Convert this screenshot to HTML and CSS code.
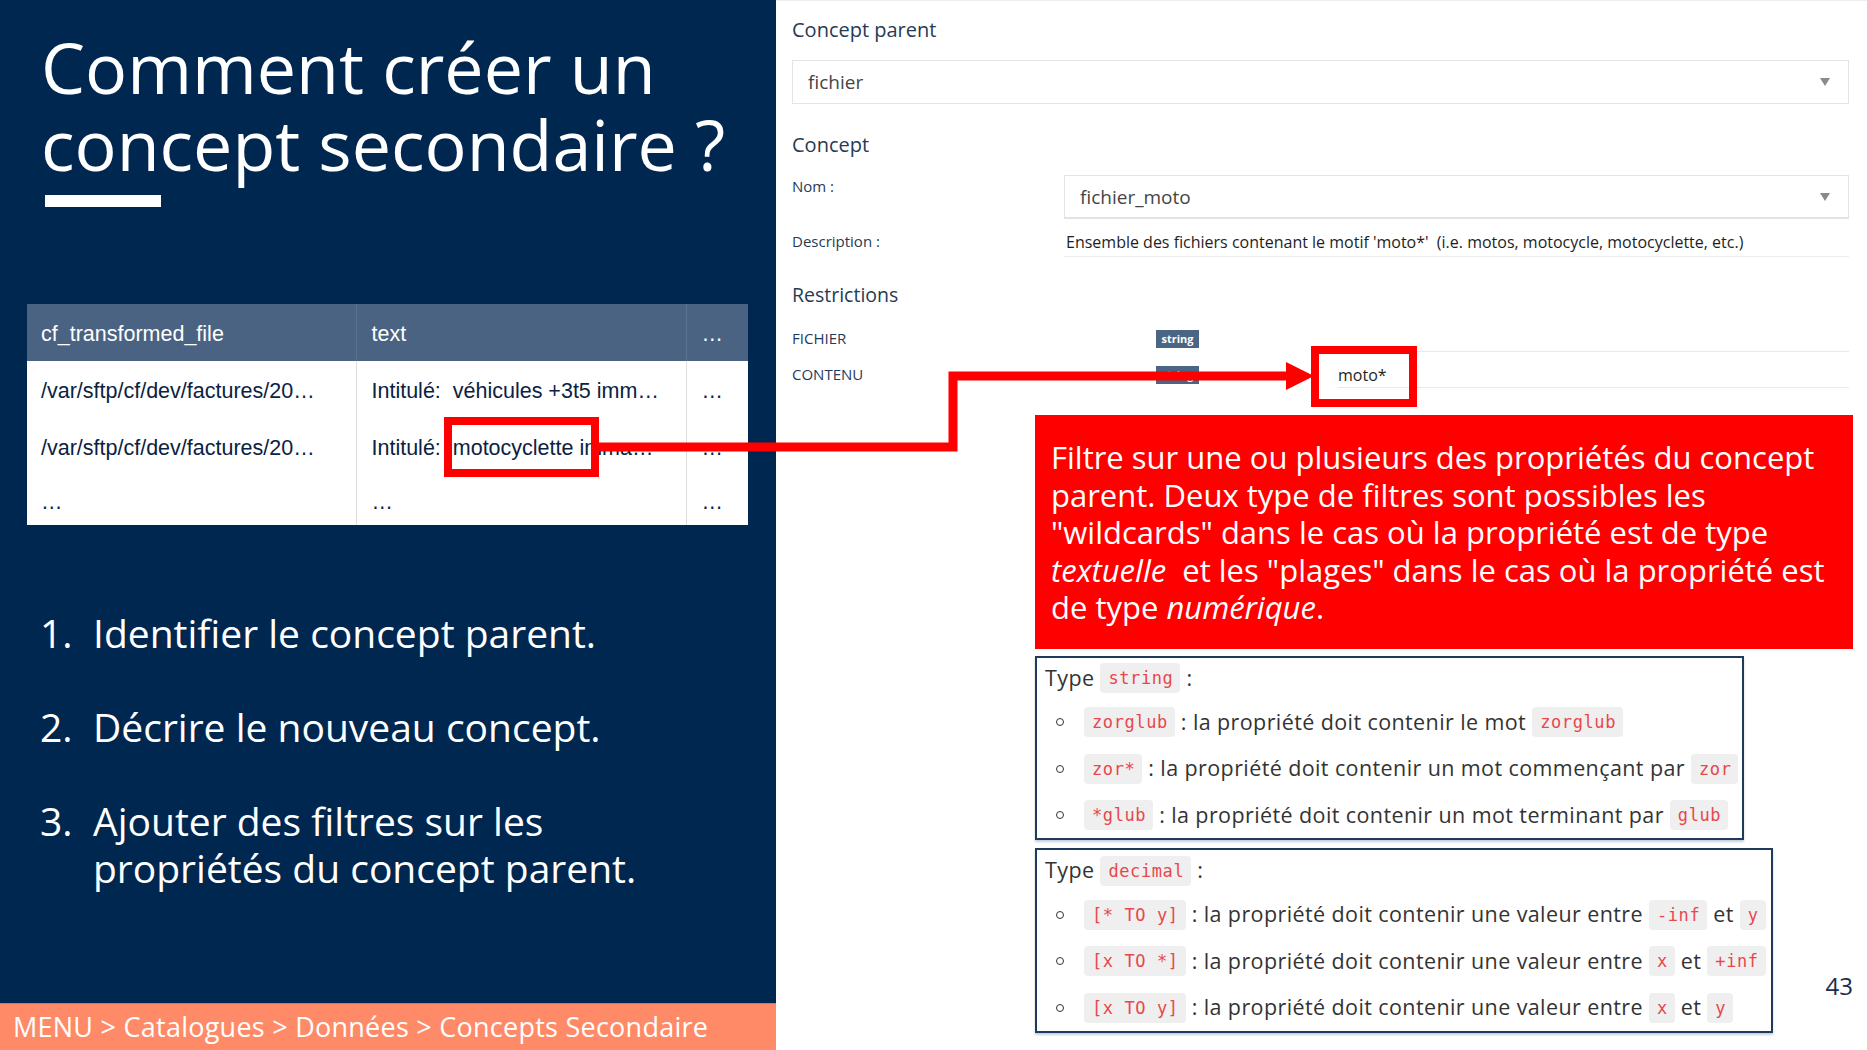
FILE: index.html
```html
<!DOCTYPE html>
<html lang="fr">
<head>
<meta charset="utf-8">
<title>Comment créer un concept secondaire ?</title>
<link rel="stylesheet" href="styles.css">
</head>
<body>
<div class="slide">
  <section class="left">
    <h1 class="title">Comment créer un<br>concept secondaire ?</h1>
    <div class="title-bar"></div>
    <table class="data">
      <colgroup><col class="c1"><col class="c2"><col class="c3"></colgroup>
      <thead>
        <tr><th>cf_transformed_file</th><th>text</th><th>…</th></tr>
      </thead>
      <tbody>
        <tr><td>/var/sftp/cf/dev/factures/20…</td><td>Intitulé:&nbsp; véhicules +3t5 imm…</td><td>…</td></tr>
        <tr><td>/var/sftp/cf/dev/factures/20…</td><td>Intitulé:&nbsp; motocyclette imma…</td><td>…</td></tr>
        <tr class="last"><td>…</td><td>…</td><td>…</td></tr>
      </tbody>
    </table>
    <ol class="steps">
      <li><span class="num">1.</span><span class="txt">Identifier le concept parent.</span></li>
      <li><span class="num">2.</span><span class="txt">Décrire le nouveau concept.</span></li>
      <li><span class="num">3.</span><span class="txt">Ajouter des filtres sur les<br>propriétés du concept parent.</span></li>
    </ol>
    <div class="crumbs">MENU &gt; Catalogues &gt; Données &gt; Concepts Secondaire</div>
  </section>

  <section class="right">
    <div class="form">
      <h2 class="sec sec-parent">Concept parent</h2>
      <div class="select"><span class="val">fichier</span><span class="caret"></span></div>
      <h2 class="sec sec-concept">Concept</h2>
      <div class="field name-row">
        <span class="flabel">Nom :</span>
        <div class="input"><span class="val">fichier_moto</span><span class="caret"></span></div>
      </div>
      <div class="field desc-row">
        <span class="flabel">Description :</span>
        <div class="dvalue">Ensemble des fichiers contenant le motif 'moto*'&nbsp; (i.e. motos, motocycle, motocyclette, etc.)</div>
      </div>
      <h2 class="sec sec-restr">Restrictions</h2>
      <div class="rrow">
        <span class="rlabel">FICHIER</span>
        <span class="badge">string</span>
        <div class="rinput"></div>
      </div>
      <div class="rrow">
        <span class="rlabel">CONTENU</span>
        <span class="badge">string</span>
        <div class="rinput">moto*</div>
      </div>
    </div>

    <div class="notes">
      <div class="callout">Filtre sur une ou plusieurs des propriétés du concept<br>parent. Deux type de filtres sont possibles les<br>"wildcards" dans le cas où la propriété est de type<br><em>textuelle</em>&nbsp; et les "plages" dans le cas où la propriété est<br>de type <em>numérique</em>.</div>

      <div class="typebox tb-string">
        <div class="tline">Type <code>string</code> :</div>
        <ul>
          <li><i class="dot"></i><code>zorglub</code> : la propriété doit contenir le mot <code>zorglub</code></li>
          <li><i class="dot"></i><code>zor*</code> : la propriété doit contenir un mot commençant par <code>zor</code></li>
          <li><i class="dot"></i><code>*glub</code> : la propriété doit contenir un mot terminant par <code>glub</code></li>
        </ul>
      </div>

      <div class="bottom-row">
        <div class="typebox tb-decimal">
          <div class="tline">Type <code>decimal</code> :</div>
          <ul>
            <li><i class="dot"></i><code>[* TO y]</code> : la propriété doit contenir une valeur entre <code>-inf</code> et <code>y</code></li>
            <li><i class="dot"></i><code>[x TO *]</code> : la propriété doit contenir une valeur entre <code>x</code> et <code>+inf</code></li>
            <li><i class="dot"></i><code>[x TO y]</code> : la propriété doit contenir une valeur entre <code>x</code> et <code>y</code></li>
          </ul>
        </div>
        <span class="pagenum">43</span>
      </div>
    </div>
  </section>

  <svg class="annot" width="1867" height="1050" viewBox="0 0 1867 1050" aria-hidden="true">
    <rect x="448" y="421" width="147" height="52" fill="none" stroke="#ff0000" stroke-width="8"/>
    <polyline points="599,447 953,447 953,376 1290,376" fill="none" stroke="#ff0000" stroke-width="9"/>
    <polygon points="1286,362 1314,376 1286,390" fill="#ff0000"/>
    <rect x="1315" y="350" width="98" height="53" fill="none" stroke="#ff0000" stroke-width="8"/>
  </svg>
</div>
</body>
</html>
```

FILE: styles.css
```css
* { box-sizing: border-box; margin: 0; padding: 0; }
html, body { width: 1867px; height: 1050px; overflow: hidden; }
body { font-family: "Open Sans", "Noto Sans", sans-serif; background: #ffffff; }

.slide { position: relative; display: flex; width: 1867px; height: 1050px; }

/* ---------- left panel ---------- */
.left {
  width: 776px;
  flex: none;
  background: #00274f;
  color: #ffffff;
  display: flex;
  flex-direction: column;
}
.title {
  font-weight: 400;
  font-size: 70px;
  line-height: 77px;
  margin: 29px 0 0 41px;
  white-space: nowrap;
}
.title-bar { width: 116px; height: 12px; background: #ffffff; margin: 12px 0 0 45px; }

.data {
  margin: 97px 0 0 27px;
  width: 721px;
  border-collapse: collapse;
  table-layout: fixed;
  font-family: "Liberation Sans", Arial, sans-serif;
  font-size: 21.5px;
}
.data col.c1 { width: 329px; }
.data col.c2 { width: 330px; }
.data col.c3 { width: 62px; }
.data th, .data td {
  height: 57px;
  padding: 4px 0 0 14px;
  text-align: left;
  font-weight: normal;
  white-space: nowrap;
  overflow: hidden;
  vertical-align: middle;
}
.data th { background: #4a6382; color: #ffffff; }
.data th + th { border-left: 1px solid #5a7290; padding-left: 15px; }
.data td { background: #ffffff; color: #0b2243; }
.data td + td { border-left: 1px solid #dedede; padding-left: 15px; }
.data tr.last td { height: 50px; }

.steps {
  list-style: none;
  margin: 84px 0 0 40px;
  font-size: 39px;
  line-height: 47px;
}
.steps li { display: flex; }
.steps li + li { margin-top: 47px; }
.steps .num { width: 53px; flex: none; }

.crumbs {
  margin-top: auto;
  height: 47px;
  background: #ff8a67;
  color: #ffffff;
  font-size: 27px;
  letter-spacing: 0.25px;
  line-height: 47px;
  padding-left: 13px;
  white-space: nowrap;
  box-shadow: inset 0 1px 0 #c97a66;
}

/* ---------- right panel ---------- */
.right {
  flex: 1;
  padding: 0 14px 0 16px;
  display: flex;
  flex-direction: column;
  box-shadow: inset 0 1px 0 #eeeeee;
  color: #263b54;
}
.form { margin-right: 4px; }
.sec { font-weight: 400; font-size: 20px; line-height: 28px; color: #263b54; }
.sec-parent { margin-top: 16px; }
.sec-concept { margin-top: 27px; }
.sec-restr { margin-top: 24px; font-size: 19.5px; }

.select, .input {
  height: 44px;
  border: 1px solid #e4e4e4;
  display: flex;
  align-items: center;
  justify-content: space-between;
  font-size: 19px;
  color: #454545;
}
.select { margin-top: 16px; padding-left: 15px; }
.input { flex: 1; padding-left: 15px; border-bottom: 2px solid #e2e2e2; }
.caret {
  width: 0; height: 0;
  border-left: 5px solid transparent;
  border-right: 5px solid transparent;
  border-top: 8px solid #8a8a8a;
  margin-right: 18px;
}

.field { display: flex; align-items: flex-start; }
.name-row { margin-top: 16px; }
.flabel { width: 272px; flex: none; font-size: 15px; line-height: 20px; color: #263b54; }
.name-row .flabel { margin-top: 1px; }
.desc-row .flabel { padding-top: 12px; }
.dvalue {
  flex: 1;
  font-size: 16px;
  line-height: 20px;
  color: #1e1e1e;
  padding: 13px 0 4px 2px;
  border-bottom: 1px solid #ececec;
  white-space: nowrap;
}

.rrow { display: flex; align-items: flex-start; height: 36px; }
.sec-restr + .rrow { margin-top: 7px; }
.rlabel { width: 364px; flex: none; font-size: 15px; line-height: 20px; padding-top: 12px; color: #1f3a5f; }
.badge {
  width: 43px;
  height: 18px;
  margin-top: 14px;
  background: #4b6584;
  color: #ffffff;
  font-size: 11px;
  font-weight: 700;
  line-height: 18px;
  text-align: center;
  flex: none;
}
.rinput {
  margin-left: 139px;
  flex: 1;
  height: 36px;
  border-bottom: 1px solid #e8e8ef;
  font-size: 16px;
  line-height: 20px;
  padding-top: 13px;
  color: #1e1e1e;
}

/* ---------- annotations ---------- */
.notes { margin-left: 243px; width: 818px; display: flex; flex-direction: column; }
.callout {
  margin-top: 27px;
  background: #ff0000;
  color: #ffffff;
  font-size: 31px;
  line-height: 37.6px;
  padding: 24px 10px 22px 16px;
  white-space: nowrap;
}
.callout em { font-style: italic; }

.typebox {
  border: 2px solid #1e3a5c;
  box-shadow: 0 2px 2px rgba(30, 58, 92, 0.25);
  background: #ffffff;
  color: #333333;
  font-size: 21.5px;
  letter-spacing: 0.4px;
  padding: 0 6px 0 8px;
  white-space: nowrap;
}
.tb-string { margin-top: 7px; width: 709px; }
.bottom-row { display: flex; align-items: flex-end; margin-top: 8px; }
.tb-decimal { width: 738px; }
.tline { height: 41px; line-height: 39px; }
.typebox ul { list-style: none; }
.typebox li { height: 46.5px; line-height: 46.5px; }
.dot {
  display: inline-block;
  width: 8px; height: 8px;
  border: 1.5px solid #333333;
  border-radius: 50%;
  margin: 0 20px 0 11px;
  vertical-align: middle;
  position: relative; top: -2px;
}
code {
  display: inline-block;
  font-family: "DejaVu Sans Mono", "Liberation Mono", monospace;
  font-size: 17px;
  letter-spacing: 0.6px;
  color: #e8474c;
  background: #efefef;
  border-radius: 4px;
  padding: 0 7px 0 8px;
  line-height: 30px;
  height: 30px;
  vertical-align: middle;
  position: relative; top: -2px;
}
.pagenum {
  margin-left: auto;
  margin-bottom: 32px;
  font-size: 24px;
  line-height: 30px;
  color: #1b2f4d;
}

.annot { position: absolute; left: 0; top: 0; pointer-events: none; }
```
